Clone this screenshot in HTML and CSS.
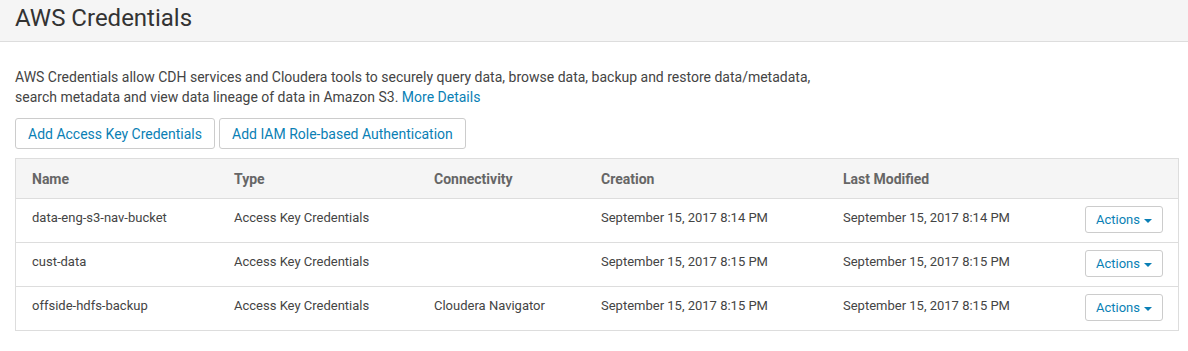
FILE: index.html
```html
<!DOCTYPE html>
<html>
<head>
    <title>AWS Credentials</title>
    <link rel="stylesheet" href="styles.css">
</head>
<body>
    <div class="page-header">
        <h1>AWS Credentials</h1>
    </div>

    <div class="content">
        <p class="intro">
            AWS Credentials allow CDH services and Cloudera tools to securely query data, browse data, backup and restore data/metadata,<br>
            search metadata and view data lineage of data in Amazon S3. <a href="#">More Details</a>
        </p>

        <div class="toolbar">
            <button class="btn">Add Access Key Credentials</button>
            <button class="btn">Add IAM Role-based Authentication</button>
        </div>

        <table class="cred-table">
            <thead>
                <tr>
                    <th class="col-name">Name</th>
                    <th class="col-type">Type</th>
                    <th class="col-conn">Connectivity</th>
                    <th class="col-created">Creation</th>
                    <th class="col-modified">Last Modified</th>
                    <th class="col-actions"></th>
                </tr>
            </thead>
            <tbody>
                <tr>
                    <td>data-eng-s3-nav-bucket</td>
                    <td>Access Key Credentials</td>
                    <td></td>
                    <td>September 15, 2017 8:14 PM</td>
                    <td>September 15, 2017 8:14 PM</td>
                    <td class="cell-actions"><button class="btn btn-sm">Actions <span class="caret"></span></button></td>
                </tr>
                <tr>
                    <td>cust-data</td>
                    <td>Access Key Credentials</td>
                    <td></td>
                    <td>September 15, 2017 8:15 PM</td>
                    <td>September 15, 2017 8:15 PM</td>
                    <td class="cell-actions"><button class="btn btn-sm">Actions <span class="caret"></span></button></td>
                </tr>
                <tr>
                    <td>offside-hdfs-backup</td>
                    <td>Access Key Credentials</td>
                    <td>Cloudera Navigator</td>
                    <td>September 15, 2017 8:15 PM</td>
                    <td>September 15, 2017 8:15 PM</td>
                    <td class="cell-actions"><button class="btn btn-sm">Actions <span class="caret"></span></button></td>
                </tr>
            </tbody>
        </table>
    </div>
</body>
</html>
```

FILE: styles.css
```css
body {
    font-family: Roboto, "Liberation Sans", sans-serif;
    margin: 0;
    background-color: #fff;
    color: #444;
}

.page-header {
    background-color: #f5f5f5;
    border-bottom: 1px solid #ddd;
    height: 41px;
    padding: 0 15px;
}

.page-header h1 {
    margin: 0;
    font-size: 24px;
    font-weight: 400;
    line-height: 37px;
    color: #333;
}

.content {
    padding: 25px 10px 0 15px;
}

.intro {
    margin: 0 0 11px 0;
    font-size: 14px;
    line-height: 20px;
    color: #444;
}

.intro a {
    color: #0a7fb5;
    text-decoration: none;
}

.toolbar {
    display: flex;
    gap: 4px;
    margin-bottom: 9px;
}

.btn {
    font-family: inherit;
    font-size: 14px;
    color: #0a7fb5;
    background-color: #fff;
    border: 1px solid #ccc;
    border-radius: 3px;
    padding: 0 12px;
    height: 31px;
    cursor: pointer;
}

.btn-sm {
    font-size: 13px;
    height: 27px;
    padding: 0 10px;
}

.caret {
    display: inline-block;
    width: 0;
    height: 0;
    margin-left: 1px;
    vertical-align: middle;
    border-top: 4px solid #0a7fb5;
    border-left: 4px solid transparent;
    border-right: 4px solid transparent;
}

.cred-table {
    width: 1164px;
    border-collapse: collapse;
    border: 1px solid #ddd;
    font-size: 13px;
}

.cred-table th {
    background-color: #f5f5f5;
    color: #666;
    font-size: 14px;
    font-weight: 700;
    text-align: left;
    height: 39px;
    padding: 0 0 0 16px;
}

.cred-table td {
    border-top: 1px solid #ddd;
    height: 44px;
    box-sizing: border-box;
    padding: 10px 0 0 16px;
    line-height: 18px;
    vertical-align: top;
    color: #444;
}

.cred-table td.cell-actions {
    padding-top: 7px;
}

.col-name { width: 186px; }
.col-type { width: 184px; }
.col-conn { width: 151px; }
.col-created { width: 226px; }
.col-modified { width: 226px; }
.col-actions { width: auto; }
```
